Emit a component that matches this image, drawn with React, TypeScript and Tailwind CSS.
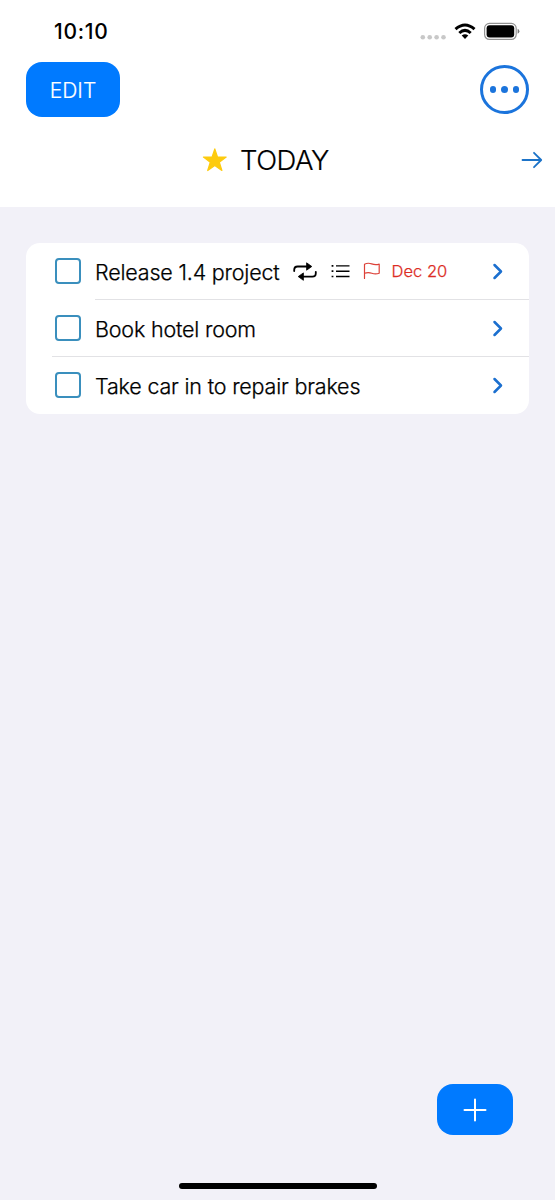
import type { ReactNode } from 'react';

function StatusBar() {
  return (
    <div className="flex h-[62px] items-center justify-between pt-0.5 pl-[54px] pr-[35px]">
      <span className="text-[21px] leading-6 font-medium tracking-[0.7px]">10:10</span>
      <svg width="100" height="24" viewBox="420 20 100 24" aria-hidden="true">
        <g fill="#c8c8c8">
          <circle cx="422.8" cy="37.2" r="2.3" />
          <circle cx="429.7" cy="37.2" r="2.3" />
          <circle cx="436.6" cy="37.2" r="2.3" />
          <circle cx="443.5" cy="37.2" r="2.3" />
        </g>
        <g fill="none" stroke="#000" strokeWidth="3">
          <path d="M455.5 29.2Q465 20.8 474.5 29.2" />
          <path d="M459.3 33Q465 27.8 470.7 33" />
        </g>
        <path d="M461.7 35.6Q465 33 468.3 35.6L465 39.1Z" />
        <rect x="484.6" y="23.4" width="31.6" height="16" rx="4.8" fill="none" stroke="#929292" strokeWidth="1.2" />
        <rect x="486.6" y="25.3" width="27.6" height="12.2" rx="3" />
        <path d="M517.6 28.8Q519.4 29.6 519.4 31.3T517.6 33.8Z" fill="#777" />
      </svg>
    </div>
  );
}

function Header() {
  return (
    <header className="h-[207px] bg-white">
      <StatusBar />
      <div className="flex h-[55px] items-center justify-between pl-[26px] pr-[26px]">
        <button className="flex h-[55px] w-[94px] items-center justify-center rounded-[16px] bg-[#007aff] pt-0.5 text-[21px] font-light text-white [-webkit-text-stroke:0.2px]">
          EDIT
        </button>
        <button className="flex size-[49px] items-center justify-center gap-[5px] rounded-full border-[3px] border-[#1b74dc]" aria-label="More">
          <i className="size-[6.4px] rounded-full bg-[#1b74dc]" />
          <i className="size-[6.4px] rounded-full bg-[#1b74dc]" />
          <i className="size-[6.4px] rounded-full bg-[#1b74dc]" />
        </button>
      </div>
      <div className="flex h-[86px] items-center pl-[202px] pr-3">
        <svg width="26" height="26" viewBox="0 0 26 26" aria-hidden="true">
          <path d="M12.8 1.9L15.5 10H24.2L17.3 15.2L19.9 23.5L12.8 18.5L5.7 23.5L8.3 15.2L1.4 10H10.1Z" fill="#fdcb0f" stroke="#fdcb0f" strokeWidth="1.2" strokeLinejoin="round" />
        </svg>
        <h1 className="ml-3 text-[27.5px] leading-8 font-light tracking-[-0.5px] [-webkit-text-stroke:0.2px]">TODAY</h1>
        <svg className="ml-auto" width="22" height="18" viewBox="0 0 22 18" fill="none" stroke="#1c73c8" strokeWidth="1.8" strokeLinecap="round" strokeLinejoin="round" aria-hidden="true">
          <path d="M1.5 9H20M13 1.8L20.2 9L13 16.2" />
        </svg>
      </div>
    </header>
  );
}

function RowDetails() {
  return (
    <>
      <svg className="ml-[13px] shrink-0" width="24" height="20" viewBox="0 0 24 20" fill="none" aria-hidden="true">
        <path d="M1.2 10V8.9Q1.2 5.5 4.6 5.5H14M22.8 10.8V12.2Q22.8 15.6 19.4 15.6H10" stroke="#000" strokeWidth="1.8" strokeLinecap="round" />
        <path d="M13.6 1.8V9.2L18.8 5.5ZM10.4 11.9V19.3L5.2 15.6Z" fill="#000" stroke="#000" strokeWidth=".8" strokeLinejoin="round" />
      </svg>
      <svg className="ml-[14px] shrink-0" width="19" height="16" viewBox="0 0 19 16" stroke="#000" strokeWidth="1.4" aria-hidden="true">
        <path d="M5 2.9H18.5M5 8.2H18.5M5 13.5H18.5" />
        <path d="M.6 2.9H2.4M.6 8.2H2.4M.6 13.5H2.4" strokeWidth="1.7" />
      </svg>
      <svg className="ml-[13px] shrink-0" width="18" height="18" viewBox="0 0 18 18" fill="none" stroke="#dc4138" strokeWidth="1.2" strokeLinecap="round" strokeLinejoin="round" aria-hidden="true">
        <path d="M1.5 16.5V2.2Q5 .5 8.7 1.9T16.2 2.1V11.2Q12.5 12.6 8.8 11.2T1.5 11.3" />
      </svg>
      <span className="ml-[11px] pt-px text-[16.5px] font-light text-[#dc2c24]">Dec 20</span>
    </>
  );
}

function Row({ children, text, divider }: { children?: ReactNode; text: string; divider: string }) {
  return (
    <li>
      <div className="flex h-14 items-center pl-[29px] pr-[26px]">
        <span className="mr-[14px] size-[26px] shrink-0 rounded-[4px] border-2 border-[#3a8fbd]" />
        <span className="pt-0.5 tracking-[-0.18px]">{text}</span>
        {children}
        <svg className="ml-auto" width="11" height="18" viewBox="0 0 11 18" fill="none" stroke="#1b6fcf" strokeWidth="2.5" strokeLinecap="round" strokeLinejoin="round" aria-hidden="true">
          <path d="M2.5 3L9 9.5L2.5 16" />
        </svg>
      </div>
      <div className={`h-px bg-[#e2e2e5] ${divider}`} />
    </li>
  );
}

export default function App() {
  return (
    <div className="flex h-[1200px] w-[555px] flex-col overflow-hidden bg-[#f2f1f8] font-['Inter',sans-serif] text-black">
      <Header />
      <ul className="mx-[26px] mt-9 h-[171px] overflow-hidden rounded-[14px] bg-white text-[21.5px] font-light whitespace-nowrap [-webkit-text-stroke:0.25px]">
        <Row text="Release 1.4 project" divider="ml-[69px]">
          <RowDetails />
        </Row>
        <Row text="Book hotel room" divider="ml-[26px]" />
        <Row text="Take car in to repair brakes" divider="invisible" />
      </ul>
      <footer className="mt-auto flex flex-col">
        <button className="mr-[42px] flex h-[51px] w-[76px] items-center justify-center self-end rounded-[16px] bg-[#007aff]" aria-label="Add">
          <svg width="24" height="24" viewBox="0 0 24 24" stroke="#fff" strokeWidth="2" strokeLinecap="round" aria-hidden="true">
            <path d="M1.5 12H22.5M12 1.5V22.5" />
          </svg>
        </button>
        <div className="mt-12 mb-[11px] ml-[179px] h-[6px] w-[198px] rounded-full bg-black" />
      </footer>
    </div>
  );
}
